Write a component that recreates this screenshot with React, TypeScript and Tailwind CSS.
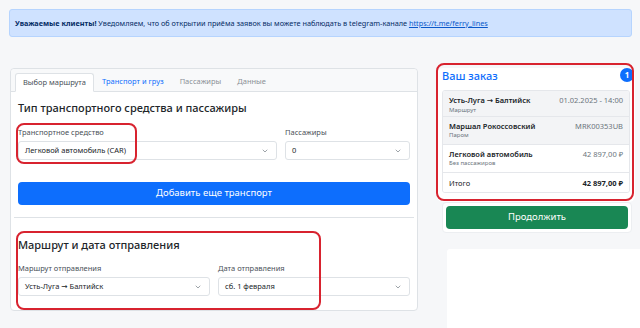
import { ChevronDown } from "lucide-react"

function Arrow() {
  return <span className="font-['DejaVu_Sans',sans-serif]">→</span>
}

function Select({ value, className }: { value: React.ReactNode; className?: string }) {
  return (
    <div
      className={
        "flex h-[19px] items-center justify-between rounded-[3px] border border-[#dee2e6] bg-white pl-[6px] pr-[7px] text-[7.5px] text-[#212529] " +
        (className ?? "")
      }
    >
      <span>{value}</span>
      <ChevronDown className="h-[8px] w-[8px] text-[#6c757d]" strokeWidth={2} />
    </div>
  )
}

function Field({ label, value, className }: { label: string; value: React.ReactNode; className?: string }) {
  return (
    <div className={className}>
      <div className="h-[10px] text-[7.5px] leading-[10px] text-[#495057]">{label}</div>
      <Select value={value} className="mt-[4px]" />
    </div>
  )
}

function OrderRow({
  title,
  sub,
  value,
  gray,
  bold,
  h,
}: {
  title: React.ReactNode
  sub?: string
  value: string
  gray?: boolean
  bold?: boolean
  h: string
}) {
  return (
    <div
      className={
        "flex items-start justify-between border-b border-[#e5e7eb] px-[6px] last:border-b-0 " +
        h +
        (gray ? " bg-[#f3f4f6]" : " bg-white")
      }
    >
      <div className={sub ? "pt-[4px]" : "pt-[5px]"}>
        <div className={"text-[7.5px] leading-[10px] " + (sub ? "font-semibold text-[#212529]" : "text-[#212529]")}>
          {title}
        </div>
        {sub && <div className="text-[6px] leading-[9px] text-[#6c757d]">{sub}</div>}
      </div>
      <div
        className={
          "text-[7.5px] leading-[10px] " +
          (sub ? "pt-[4px] " : "pt-[5px] ") +
          (bold ? "font-bold text-[#212529]" : "text-[#6c757d]")
        }
      >
        {value}
      </div>
    </div>
  )
}

export default function App() {
  return (
    <div className="relative h-[328px] w-[640px] overflow-hidden bg-[#f6f7f9] font-['Noto_Sans',sans-serif] text-[#212529]">
      {/* Alert */}
      <div className="px-[9px] pt-[9px] pr-[8px]">
        <div className="flex h-[28px] items-center rounded-[3px] border border-[#b6d4fe] bg-[#cfe2ff] px-[5px] text-[7.3px] text-[#052c65]">
          <span>
            <b>Уважаемые клиенты!</b> Уведомляем, что об открытии приёма заявок вы можете наблюдать в
            telegram-канале{" "}
            <a className="text-[#0a58ca] underline" href="#">
              https://t.me/ferry_lines
            </a>
          </span>
        </div>
      </div>

      <div className="mt-[31px] flex pl-[10px]">
        {/* Left card */}
        <div className="h-[243px] w-[408px] rounded-[4px] border border-[#dee2e6] bg-white">
          <div className="flex h-[23px] items-end rounded-t-[4px] border-b border-[#dee2e6] bg-[#f8f9fa] px-[4px]">
            <div className="-mb-px flex h-[19px] items-center rounded-t-[3px] border border-b-white border-[#dee2e6] bg-white px-[7px] text-[7.5px] text-[#495057]">
              Выбор маршрута
            </div>
            <div className="flex h-[19px] items-center px-[8px] text-[7.5px] text-[#0d6efd]">Транспорт и груз</div>
            <div className="flex h-[19px] items-center px-[8px] text-[7.5px] text-[#8a9096]">Пассажиры</div>
            <div className="flex h-[19px] items-center px-[8px] text-[7.5px] text-[#8a9096]">Данные</div>
          </div>

          <div className="px-[7px] pb-[14px]">
            <h5 className="mt-[8px] text-[11px] leading-[16px] font-medium text-[#212529]">
              Тип транспортного средства и пассажиры
            </h5>
            <div className="mt-[11px] grid grid-cols-[259px_1fr] gap-[8px]">
              <Field label="Транспортное средство" value="Легковой автомобиль (CAR)" />
              <Field label="Пассажиры" value="0" />
            </div>
            <button className="mt-[22px] flex h-[23px] w-full items-center justify-center rounded-[4px] bg-[#0d6efd] text-[9.5px] text-white">
              Добавить еще транспорт
            </button>
            <div className="-mx-[4px] mt-[12px] border-t border-[#dee2e6]" />
            <h5 className="mt-[19px] text-[11px] leading-[16px] font-medium text-[#212529]">
              Маршрут и дата отправления
            </h5>
            <div className="mt-[10px] grid grid-cols-2 gap-[8px]">
              <Field
                label="Маршрут отправления"
                value={
                  <>
                    Усть-Луга <Arrow /> Балтийск
                  </>
                }
              />
              <Field label="Дата отправления" value="сб. 1 февраля" />
            </div>
          </div>
        </div>

        {/* Right column */}
        <div className="ml-[19px] w-[198px]">
          <div className="rounded-[6px] bg-white px-[5px] pb-[9px]">
            <div className="relative h-[16px]">
              <h5 className="text-[11px] leading-[16px] font-medium text-[#0d6efd]">Ваш заказ</h5>
              <span className="absolute top-0 -right-[4px] flex h-[14px] w-[14px] items-center justify-center rounded-full bg-[#0d6efd] text-[8px] font-bold text-white">
                1
              </span>
            </div>
            <div className="mt-[6px] overflow-hidden rounded-[3px] border border-[#e5e7eb]">
              <OrderRow
                title={
                  <>
                    Усть-Луга <Arrow /> Балтийск
                  </>
                }
                sub="Маршрут"
                value="01.02.2025 - 14:00"
                gray
                h="h-[26px]"
              />
              <OrderRow title="Маршал Рокоссовский" sub="Паром" value="MRK00353UB" gray h="h-[28px]" />
              <OrderRow title="Легковой автомобиль" sub="Без пассажиров" value="42 897,00 ₽" h="h-[28px]" />
              <OrderRow title="Итого" value="42 897,00 ₽" bold h="h-[19px]" />
            </div>
          </div>
          <div className="ml-[5px] w-[190px] rounded-[4px] border border-[#eceef1] bg-white p-[3px]">
            <button className="flex h-[23px] w-full items-center justify-center rounded-[4px] bg-[#198754] text-[9.5px] text-white">
              Продолжить
            </button>
          </div>
          <div className="mt-[16px] ml-[10px] h-[90px] w-[200px] rounded-[3px] bg-white" />
        </div>
      </div>

      {/* Annotation frames */}
      <div className="pointer-events-none absolute top-[123px] left-[16px] h-[41px] w-[121px] rounded-[8px] border-2 border-[#d8232f]" />
      <div className="pointer-events-none absolute top-[231px] left-[16px] h-[79px] w-[305px] rounded-[8px] border-2 border-[#d8232f]" />
      <div className="pointer-events-none absolute top-[63px] left-[436px] h-[138px] w-[198px] rounded-[8px] border-2 border-[#d8232f]" />
    </div>
  )
}
